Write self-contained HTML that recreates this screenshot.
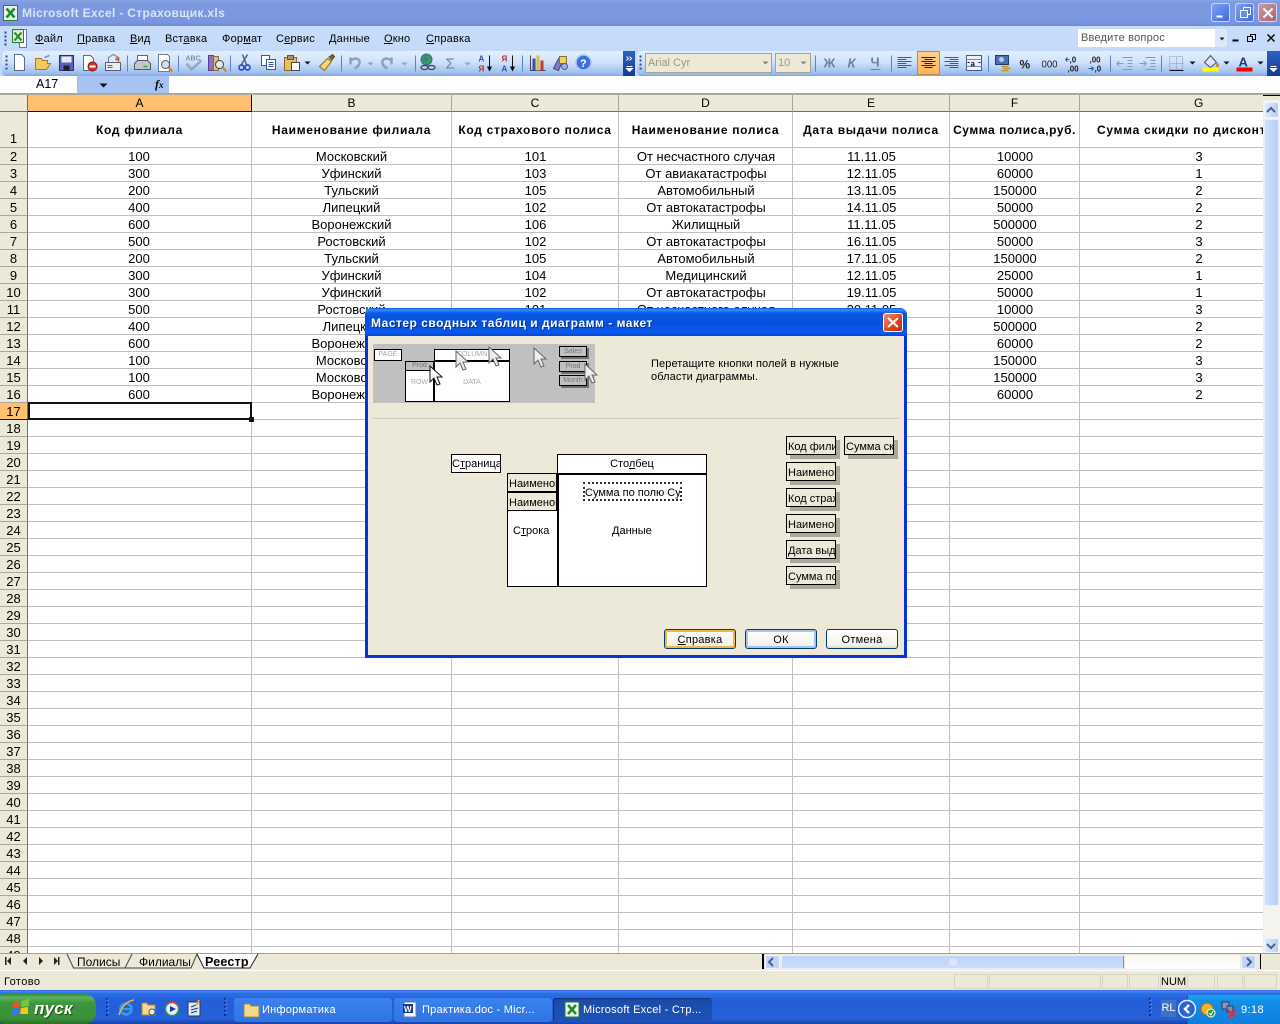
<!DOCTYPE html>
<html><head><meta charset="utf-8"><title>Microsoft Excel - Страховщик.xls</title>
<style>
html,body{margin:0;padding:0;background:#fff}
#p{position:relative;width:1280px;height:1024px;overflow:hidden;font-family:"Liberation Sans",sans-serif;font-size:11px;color:#000;background:#fff}
#p div,#p span.a{position:absolute;white-space:nowrap}
.m{top:33px;height:13px;line-height:13px;font-size:11px;letter-spacing:.2px}
.ch{top:95px;height:16px;line-height:17px;text-align:center;font-size:12px;background:#ece9d8;border-right:1px solid #aca899;border-bottom:1px solid #716f64;box-sizing:content-box}
.vl{top:112px;width:1px;height:841px;background:#c0c0c0}
.rh{left:0;width:27px;height:16px;line-height:17px;text-align:center;font-size:13px;background:#ece9d8;border-right:1px solid #716f64;border-bottom:1px solid #aca899;overflow:hidden}
.h{top:112px;height:35px;line-height:36px;font-weight:bold;font-size:12px;letter-spacing:.7px;text-align:center;overflow:hidden}
table{position:absolute;left:27px;top:148px;border-collapse:collapse;table-layout:fixed;width:1291px}
td{height:17px;padding:1px 0 0;box-sizing:border-box;text-align:center;font-size:13px;line-height:16px;white-space:nowrap;overflow:hidden}
tr{height:17px}
.b{background:#ece9d8;border:1px solid #000;box-sizing:border-box;overflow:hidden;font-size:11px;line-height:20px;letter-spacing:0;padding-left:1px}
.fb{width:50px;height:19px;box-shadow:4px 4px 0 #aca899}
.w{background:#fff;border:1px solid #000;box-sizing:border-box}
.btn{top:629px;width:72px;height:20px;border:1px solid #003c74;border-radius:3px;box-sizing:border-box;background:linear-gradient(#fff,#f3f2ea 85%,#dcd8c8);text-align:center;line-height:20px;font-size:11px;letter-spacing:.25px}
.sp{top:974px;height:15px;border:1px solid #d8d4c4;box-sizing:border-box}
.tb{top:998px;height:24px;border-radius:3px;color:#fff;font-size:11px;line-height:24px;letter-spacing:.25px;box-sizing:border-box}
.pv{font-size:7px;color:#a8a8a8;text-align:center;line-height:10px}
u{text-underline-offset:1px}
</style></head><body><div id="p">

<!-- title bar -->
<div style="left:0;top:0;width:1280px;height:26px;background:linear-gradient(#8aa5e4 0,#7d99e0 12%,#7a96df 85%,#6f8cd6 100%)"></div>
<div style="left:22px;top:6px;font-weight:bold;font-size:12px;letter-spacing:.33px;color:#d8e4f8;line-height:15px">Microsoft Excel - Страховщик.xls</div>
<div style="left:1211px;top:3px;width:19px;height:19px;border:1px solid #c7d5f5;border-radius:3px;box-sizing:border-box;background:linear-gradient(135deg,#7ea0ef,#3f6ce0)"></div>
<div style="left:1235px;top:3px;width:19px;height:19px;border:1px solid #c7d5f5;border-radius:3px;box-sizing:border-box;background:linear-gradient(135deg,#7ea0ef,#3f6ce0)"></div>
<div style="left:1258px;top:3px;width:19px;height:19px;border:1px solid #dcd5e5;border-radius:3px;box-sizing:border-box;background:linear-gradient(135deg,#c99aa8,#a8646f)"></div>

<!-- menu bar -->
<div style="left:0;top:26px;width:1280px;height:50px;background:linear-gradient(#c8dcfa,#c2d8f8)"></div>
<div class="m" style="left:35px"><u>Ф</u>айл</div>
<div class="m" style="left:77px"><u>П</u>равка</div>
<div class="m" style="left:130px"><u>В</u>ид</div>
<div class="m" style="left:165px">Вст<u>а</u>вка</div>
<div class="m" style="left:222px">Фор<u>м</u>ат</div>
<div class="m" style="left:276px">С<u>е</u>рвис</div>
<div class="m" style="left:329px"><u>Д</u>анные</div>
<div class="m" style="left:384px"><u>О</u>кно</div>
<div class="m" style="left:426px"><u>С</u>правка</div>
<div style="left:1078px;top:29px;width:149px;height:18px;background:#fff"></div>
<div style="left:1081px;top:31px;line-height:14px;color:#555;letter-spacing:.2px">Введите вопрос</div>
<div style="left:1215px;top:29px;width:12px;height:18px;background:#dbe8fb"></div>

<!-- toolbars -->
<div style="left:2px;top:51px;width:621px;height:25px;border-radius:4px 0 0 4px;background:linear-gradient(#e3effd,#cfe1fb 45%,#9dbdee 90%,#7fa4de)"></div>
<div style="left:623px;top:51px;width:12px;height:25px;background:linear-gradient(#2d62c4,#123a94)"></div>
<div style="left:637px;top:51px;width:630px;height:25px;border-radius:4px 0 0 4px;background:linear-gradient(#e3effd,#cfe1fb 45%,#9dbdee 90%,#7fa4de)"></div>
<div style="left:1267px;top:51px;width:13px;height:25px;background:linear-gradient(#2d62c4,#123a94)"></div>
<div style="left:645px;top:53px;width:127px;height:20px;background:#ece9d8;border:1px solid #a5a28f;box-sizing:border-box;color:#9a978a;line-height:18px;padding-left:2px">Arial Cyr</div>
<div style="left:775px;top:53px;width:36px;height:20px;background:#ece9d8;border:1px solid #a5a28f;box-sizing:border-box;color:#9a978a;line-height:18px;padding-left:2px">10</div>
<div style="left:917px;top:51px;width:23px;height:24px;background:linear-gradient(#ffd08a,#fdb45c);border:1px solid #b88a50;box-sizing:border-box"></div>

<!-- formula bar -->
<div style="left:0;top:76px;width:1280px;height:17px;background:#fff"></div>
<div style="left:77px;top:76px;width:92px;height:17px;background:#a6c3f3"></div>
<div style="left:36px;top:77px;font-size:12.5px;line-height:15px">A17</div>
<div style="left:155px;top:77px;font-family:'Liberation Serif',serif;font-style:italic;font-weight:bold;font-size:12px;line-height:15px">f<span style="font-size:9px">x</span></div>
<div style="left:0;top:93px;width:1280px;height:2px;background:#aca899"></div>

<!-- column headers -->
<div class="ch" style="left:0;width:27px;border-right-color:#716f64"></div>
<div class="ch" style="left:28px;width:223px;background:#ffc06f;border-right-color:#000080;border-bottom-color:#000080">A</div>
<div class="ch" style="left:252px;width:199px">B</div>
<div class="ch" style="left:452px;width:166px">C</div>
<div class="ch" style="left:619px;width:173px">D</div>
<div class="ch" style="left:793px;width:156px">E</div>
<div class="ch" style="left:950px;width:129px">F</div>
<div class="ch" style="left:1080px;width:183px;border-right:0;text-indent:114px;text-align:left">G</div>

<!-- grid -->
<div style="left:28px;top:147px;width:1235px;height:806px;background:repeating-linear-gradient(to bottom,#c0c0c0 0,#c0c0c0 1px,transparent 1px,transparent 17px)"></div>
<div class="vl" style="left:251px"></div><div class="vl" style="left:451px"></div><div class="vl" style="left:618px"></div><div class="vl" style="left:792px"></div><div class="vl" style="left:949px"></div><div class="vl" style="left:1079px"></div>

<!-- sheet header -->
<div class="h" style="left:28px;width:223px">Код филиала</div>
<div class="h" style="left:252px;width:199px">Наименование филиала</div>
<div class="h" style="left:452px;width:166px">Код страхового полиса</div>
<div class="h" style="left:619px;width:173px">Наименование полиса</div>
<div class="h" style="left:793px;width:156px">Дата выдачи полиса</div>
<div class="h" style="left:950px;width:129px;letter-spacing:.55px">Сумма полиса,руб.</div>
<div class="h" style="left:1080px;width:183px;text-align:left;text-indent:17px">Сумма скидки по дисконту</div>

<table>
<colgroup><col style="width:224px"><col style="width:201px"><col style="width:167px"><col style="width:174px"><col style="width:157px"><col style="width:130px"><col style="width:238px"></colgroup>
<tr><td>100</td><td>Московский</td><td>101</td><td>От несчастного случая</td><td>11.11.05</td><td>10000</td><td>3</td></tr>
<tr><td>300</td><td>Уфинский</td><td>103</td><td>От авиакатастрофы</td><td>12.11.05</td><td>60000</td><td>1</td></tr>
<tr><td>200</td><td>Тульский</td><td>105</td><td>Автомобильный</td><td>13.11.05</td><td>150000</td><td>2</td></tr>
<tr><td>400</td><td>Липецкий</td><td>102</td><td>От автокатастрофы</td><td>14.11.05</td><td>50000</td><td>2</td></tr>
<tr><td>600</td><td>Воронежский</td><td>106</td><td>Жилищный</td><td>11.11.05</td><td>500000</td><td>2</td></tr>
<tr><td>500</td><td>Ростовский</td><td>102</td><td>От автокатастрофы</td><td>16.11.05</td><td>50000</td><td>3</td></tr>
<tr><td>200</td><td>Тульский</td><td>105</td><td>Автомобильный</td><td>17.11.05</td><td>150000</td><td>2</td></tr>
<tr><td>300</td><td>Уфинский</td><td>104</td><td>Медицинский</td><td>12.11.05</td><td>25000</td><td>1</td></tr>
<tr><td>300</td><td>Уфинский</td><td>102</td><td>От автокатастрофы</td><td>19.11.05</td><td>50000</td><td>1</td></tr>
<tr><td>500</td><td>Ростовский</td><td>101</td><td>От несчастного случая</td><td>20.11.05</td><td>10000</td><td>3</td></tr>
<tr><td>400</td><td>Липецкий</td><td></td><td></td><td></td><td>500000</td><td>2</td></tr>
<tr><td>600</td><td>Воронежский</td><td></td><td></td><td></td><td>60000</td><td>2</td></tr>
<tr><td>100</td><td>Московский</td><td></td><td></td><td></td><td>150000</td><td>3</td></tr>
<tr><td>100</td><td>Московский</td><td></td><td></td><td></td><td>150000</td><td>3</td></tr>
<tr><td>600</td><td>Воронежский</td><td></td><td></td><td></td><td>60000</td><td>2</td></tr>
</table>

<!-- row headers -->
<div class="rh" style="top:112px;height:35px;line-height:54px">1</div>
<div class="rh" style="top:148px">2</div><div class="rh" style="top:165px">3</div><div class="rh" style="top:182px">4</div><div class="rh" style="top:199px">5</div><div class="rh" style="top:216px">6</div><div class="rh" style="top:233px">7</div><div class="rh" style="top:250px">8</div><div class="rh" style="top:267px">9</div><div class="rh" style="top:284px">10</div><div class="rh" style="top:301px">11</div><div class="rh" style="top:318px">12</div><div class="rh" style="top:335px">13</div><div class="rh" style="top:352px">14</div><div class="rh" style="top:369px">15</div><div class="rh" style="top:386px">16</div>
<div class="rh" style="top:403px;background:#ffc06f;border-bottom-color:#000080">17</div>
<div class="rh" style="top:420px">18</div><div class="rh" style="top:437px">19</div><div class="rh" style="top:454px">20</div><div class="rh" style="top:471px">21</div><div class="rh" style="top:488px">22</div><div class="rh" style="top:505px">23</div><div class="rh" style="top:522px">24</div><div class="rh" style="top:539px">25</div><div class="rh" style="top:556px">26</div><div class="rh" style="top:573px">27</div><div class="rh" style="top:590px">28</div><div class="rh" style="top:607px">29</div><div class="rh" style="top:624px">30</div><div class="rh" style="top:641px">31</div><div class="rh" style="top:658px">32</div><div class="rh" style="top:675px">33</div><div class="rh" style="top:692px">34</div><div class="rh" style="top:709px">35</div><div class="rh" style="top:726px">36</div><div class="rh" style="top:743px">37</div><div class="rh" style="top:760px">38</div><div class="rh" style="top:777px">39</div><div class="rh" style="top:794px">40</div><div class="rh" style="top:811px">41</div><div class="rh" style="top:828px">42</div><div class="rh" style="top:845px">43</div><div class="rh" style="top:862px">44</div><div class="rh" style="top:879px">45</div><div class="rh" style="top:896px">46</div><div class="rh" style="top:913px">47</div><div class="rh" style="top:930px">48</div>
<div class="rh" style="top:947px;height:6px;border-bottom:0">49</div>

<!-- selection -->
<div style="left:28px;top:402px;width:224px;height:18px;border:2px solid #111;box-sizing:border-box"></div>
<div style="left:249px;top:417px;width:5px;height:5px;background:#111;border:0"></div>

<!-- vertical scrollbar -->
<div style="left:1263px;top:95px;width:17px;height:858px;background:#f4f3ee"></div>
<div style="left:1263px;top:95px;width:17px;height:5px;background:#ece9d8;border-top:1px solid #000;box-sizing:border-box"></div>
<div style="left:1264px;top:102px;width:15px;height:16px;border-radius:2px;background:linear-gradient(90deg,#e1eafe,#b6cdf7);border:1px solid #eef3fd;box-sizing:border-box"></div>
<div style="left:1264px;top:119px;width:15px;height:787px;border-radius:2px;background:linear-gradient(90deg,#cfdffb,#b9cff8);border:1px solid #e6eefc;box-sizing:border-box"></div>
<div style="left:1264px;top:938px;width:15px;height:15px;border-radius:2px;background:linear-gradient(90deg,#e1eafe,#b6cdf7);border:1px solid #eef3fd;box-sizing:border-box"></div>

<!-- sheet tabs + hscroll -->
<div style="left:0;top:953px;width:1280px;height:1px;background:#a0a0a0"></div>
<div style="left:0;top:954px;width:1280px;height:16px;background:#ece9d8"></div>
<div style="left:0;top:970px;width:1280px;height:1px;background:#fff"></div>
<div style="left:0;top:971px;width:1280px;height:19px;background:#ece9d8"></div>
<div style="left:4px;top:976px;font-size:11px;line-height:13px;letter-spacing:.4px">Готово</div>
<svg style="position:absolute;left:0;top:953px" width="280" height="17">
<path d="M67 1L73.500 15H125L132 1" fill="#ece9d8" stroke="#444" stroke-width="1"/>
<path d="M125 15H191L197 1" fill="none" stroke="#444"/>
<path d="M197 1L204 15H250L258 1Z" fill="#fff" stroke="none"/>
<path d="M197 1L204 15H250L258 1" fill="none" stroke="#222"/>
<text x="77" y="13" font-family="Liberation Sans" font-size="12">Полисы</text>
<text x="139" y="13" font-family="Liberation Sans" font-size="12">Филиалы</text>
<text x="205" y="13" font-family="Liberation Sans" font-size="12.5" font-weight="bold" letter-spacing=".2">Реестр</text>
<path d="M5 4V12H6.500V4ZM11 4V12L7 8ZM23 8L27 4V12ZM39 4V12L43 8ZM54 4V12L58 8ZM58 4H59.500V12H58Z" fill="#222"/>
</svg>
<div style="left:762px;top:954px;width:2px;height:15px;background:#000"></div>
<div style="left:765px;top:955px;width:15px;height:14px;border-radius:2px;background:#c0d3f8;border:1px solid #eef3fd;box-sizing:border-box"></div>
<div style="left:781px;top:955px;width:343px;height:14px;border-radius:2px;background:linear-gradient(#bfd4fa,#cbdcfb);border:1px solid #e6eefc;border-right-color:#6f93d8;box-sizing:border-box"></div>
<div style="left:1125px;top:955px;width:115px;height:14px;background:linear-gradient(#f7f6f2,#fff)"></div>
<div style="left:1241px;top:955px;width:15px;height:14px;border-radius:2px;background:#c0d3f8;border:1px solid #eef3fd;box-sizing:border-box"></div>
<div style="left:1260px;top:954px;width:1px;height:15px;background:#000"></div>

<!-- status panels -->
<div class="sp" style="left:954px;width:34px"></div><div class="sp" style="left:989px;width:112px"></div><div class="sp" style="left:1102px;width:26px"></div><div class="sp" style="left:1129px;width:30px"></div>
<div class="sp" style="left:1160px;width:26px;line-height:14px;text-align:center;font-size:11px">NUM</div>
<div class="sp" style="left:1187px;width:28px"></div><div class="sp" style="left:1217px;width:26px"></div><div class="sp" style="left:1244px;width:33px"></div>

<!-- toolbar & misc icons -->
<svg style="position:absolute;left:0;top:0" width="1280" height="95" font-family="Liberation Sans">
<g transform="translate(.5 .5)">
<rect x="3" y="5" width="14" height="15" fill="#e8f2e6" stroke="#2f7d32"/><path d="M6 8L14 17M14 8L6 17" stroke="#1f8a30" stroke-width="2.500"/>
<rect x="1216" y="15" width="6" height="2" fill="#fff"/>
<rect x="1243" y="7" width="7" height="7" fill="none" stroke="#fff"/><rect x="1240" y="10" width="7" height="7" fill="#6a8fe8" stroke="#fff"/>
<path d="M1263 8L1272 17M1272 8L1263 17" stroke="#fff" stroke-width="2"/>
<path d="M5 31v2M5 35v2M5 39v2M5 43v2" stroke="#2a4a90" stroke-width="2"/>
<rect x="19" y="29" width="7" height="18" fill="#fff" stroke="#6a7a98"/><rect x="12" y="29" width="11" height="13" fill="#d8ecd8" stroke="#2f7d32"/><path d="M14 32L21 40M21 32L14 40" stroke="#1f8a30" stroke-width="2"/>
<path d="M1232 40h6" stroke="#000" stroke-width="2"/>
<rect x="1250" y="34" width="5" height="5" fill="none" stroke="#000"/><rect x="1247" y="36" width="5" height="5" fill="#c2d8f8" stroke="#000"/>
<path d="M1267 34L1274 41M1274 34L1267 41" stroke="#000" stroke-width="1.500"/>
<path d="M1219 37h5l-2.500 3z" fill="#222"/>
<path d="M6 55v2M6 59v2M6 63v2M6 67v2M640 55v2M640 59v2M640 63v2M640 67v2" stroke="#2a4a90" stroke-width="2"/>
<path d="M14 54H21L24 57V70H14Z" fill="#fff" stroke="#5a6a8c"/>
<path d="M35 69V58H41L42 60H47V63H50L46 69Z" fill="#f5c85a" stroke="#a87c20"/><path d="M44 57L49 55" stroke="#8090b0" stroke-width="1.500"/>
<rect x="59" y="55" width="14" height="15" fill="#5c60b8" stroke="#2b2e70"/><rect x="61" y="56" width="10" height="6" fill="#e6e9f6"/><rect x="63" y="65" width="6" height="5" fill="#222"/>
<path d="M83 55H90L93 58V70H83Z" fill="#fff" stroke="#5a6a8c"/><circle cx="92" cy="66" r="4.500" fill="#d8342a" stroke="#801a14"/><rect x="89" y="65" width="6" height="2" fill="#fff"/>
<path d="M108 62V57L113 54L118 57V62" fill="#e4e8f2" stroke="#707888"/><rect x="105" y="62" width="15" height="8" fill="#eceef4" stroke="#59627a"/><path d="M107 65h5M107 67h5" stroke="#59627a"/><rect x="115" y="57" width="4" height="3" fill="#d86040"/>
<rect x="137" y="55" width="10" height="6" fill="#fff" stroke="#666"/><path d="M134 69V63L137 60H147L150 63V69Z" fill="#c4c8d0" stroke="#555"/><rect x="143" y="65" width="4" height="2" fill="#2fb84a"/>
<path d="M158 54H167L169 56V71H158Z" fill="#fff" stroke="#6a7a98"/><circle cx="165" cy="64" r="4" fill="#cde0f4" stroke="#556"/><path d="M168 67L172 71" stroke="#c08a30" stroke-width="2"/>
<text x="185" y="60" font-size="7" font-weight="bold" fill="#8290ac">ABC</text><path d="M186 63L191 69L201 60" fill="none" stroke="#96a4bc" stroke-width="2.500"/>
<rect x="208" y="55" width="5" height="15" fill="#8a70c0" stroke="#554090"/><rect x="213" y="56" width="5" height="14" fill="#d8c078" stroke="#887030"/><circle cx="219" cy="64" r="4" fill="#dceaf8" stroke="#444"/><path d="M222 67L226 71" stroke="#c08a30" stroke-width="2"/>
<path d="M242 54L246 64M247 54L241 64" stroke="#546080" stroke-width="1.500"/><circle cx="241" cy="67" r="2.500" fill="none" stroke="#2a50b8" stroke-width="1.700"/><circle cx="247" cy="67" r="2.500" fill="none" stroke="#2a50b8" stroke-width="1.700"/>
<rect x="261" y="55" width="8" height="10" fill="#fff" stroke="#3a55a0"/><rect x="266" y="59" width="9" height="10" fill="#fff" stroke="#3a55a0"/><path d="M268 62h5M268 64h5M268 66h5" stroke="#3a55a0"/>
<rect x="284" y="57" width="12" height="13" fill="#e8c060" stroke="#8a6a20"/><rect x="287" y="55" width="6" height="4" fill="#a09080" stroke="#555"/><rect x="291" y="62" width="8" height="8" fill="#fff" stroke="#445"/>
<path d="M304 61h6l-3 3z" fill="#111"/>
<path d="M319 66L327 58L331 61L324 70Z" fill="#f3d870" stroke="#806a20"/><path d="M328 57L332 54L334 56L331 60" fill="#8a6030" stroke="#5a4020"/>
<path d="M350 57V64M350 60C356 56 360 59 359 63C358 66 356 67 354 68" fill="none" stroke="#8e9fbf" stroke-width="2.500"/>
<path d="M367 62h6l-3 3z" fill="#8e9fbf"/>
<path d="M391 57V64M391 60C385 56 381 59 382 63C383 66 385 67 387 68" fill="none" stroke="#8e9fbf" stroke-width="2.500"/>
<path d="M401 62h6l-3 3z" fill="#8e9fbf"/>
<circle cx="426" cy="59" r="5.500" fill="#3a9a50" stroke="#2a6ea8"/><path d="M423 57h4v3h-4z" fill="#3a70c8"/><ellipse cx="424" cy="67" rx="3.500" ry="2" fill="none" stroke="#444" stroke-width="1.300"/><ellipse cx="431" cy="67" rx="3.500" ry="2" fill="none" stroke="#444" stroke-width="1.300"/>
<text x="445" y="68" font-size="15" fill="#6f80a4">Σ</text><path d="M464 62h6l-3 3z" fill="#8e9fbf"/>
<text x="478" y="61" font-size="8" font-weight="bold" fill="#2a50a8">А</text><text x="478" y="71" font-size="8" font-weight="bold" fill="#a8322a">Я</text><path d="M489 55V68M487 66L489 70L491 66" fill="#111" stroke="#111"/>
<text x="501" y="61" font-size="8" font-weight="bold" fill="#a8322a">Я</text><text x="501" y="71" font-size="8" font-weight="bold" fill="#2a50a8">А</text><path d="M512 55V68M510 66L512 70L514 66" fill="#111" stroke="#111"/>
<path d="M530 55V70H545" fill="none" stroke="#445"/><rect x="532" y="58" width="3" height="12" fill="#3a50b0"/><rect x="536" y="55" width="3" height="15" fill="#d8c040"/><rect x="540" y="60" width="3" height="10" fill="#c83a30"/>
<path d="M553 68L558 58L562 60L558 70Z" fill="#8a78c8" stroke="#4a4088"/><rect x="559" y="56" width="7" height="7" fill="#f0d060" stroke="#887030"/><circle cx="564" cy="66" r="3" fill="#9db0e0" stroke="#4a5a98"/>
<circle cx="583" cy="62" r="7.500" fill="#3a70e0" stroke="#a8c4f4" stroke-width="1.500"/><text x="579.500" y="66.500" font-size="11" font-weight="bold" fill="#fff">?</text>
<path d="M127 55V71M178 55V71M230 55V71M341 55V71M415 55V71M522 55V71M815 55V71M891 55V71M988 55V71M1110 55V71M1161 55V71" stroke="#5e83c4"/>
<path d="M626 56l2 2-2 2M629 56l2 2-2 2" fill="none" stroke="#fff"/><path d="M626 66h6M626 68h6l-3 3z" fill="#fff" stroke="#fff"/>
<path d="M1270 66h6M1270 68h6l-3 3z" fill="#fff" stroke="#fff"/>
<path d="M762 61h6l-3 3zM800 61h6l-3 3z" fill="#8a8878"/>
<text x="823" y="67" font-size="13" font-weight="bold" fill="#6f80a4">Ж</text>
<text x="847" y="67" font-size="13" font-weight="bold" font-style="italic" fill="#6f80a4">К</text>
<text x="870" y="66" font-size="13" font-weight="bold" fill="#6f80a4">Ч</text><path d="M870 69h10" stroke="#6f80a4"/>
<path d="M897 57h14M897 59h9M897 61h14M897 63h9M897 65h14M897 67h9" stroke="#445a88"/>
<path d="M921 57h14M924 59h8M921 61h14M924 63h8M921 65h14M924 67h8" stroke="#223"/>
<path d="M944 57h14M949 59h9M944 61h14M949 63h9M944 65h14M949 67h9" stroke="#445a88"/>
<rect x="966" y="55" width="15" height="15" fill="#eef2fa" stroke="#4a5a88"/><path d="M966 59h15M966 66h15" stroke="#7b8cb2"/><text x="970" y="66" font-size="8" font-weight="bold" fill="#111">a</text><path d="M967 62h2M978 62h2" stroke="#111"/>
<rect x="995" y="55" width="13" height="9" fill="#4a70b8" stroke="#203a78"/><circle cx="1001" cy="59" r="2.500" fill="#bcd"/><path d="M1001 66h7M1003 68h7M1001 70h7" stroke="#c09a20" stroke-width="1.500"/>
<text x="1019" y="68" font-size="12" font-weight="bold" fill="#222">%</text>
<text x="1041" y="67" font-size="10.500" fill="#222" textLength="16" lengthAdjust="spacingAndGlyphs">000</text>
<text x="1069" y="62" font-size="8" font-weight="bold" fill="#222">,0</text><text x="1067" y="71" font-size="8" font-weight="bold" fill="#222">,00</text><path d="M1065 59h4M1065 59l2-2M1065 59l2 2" stroke="#2a50b8" fill="none"/>
<text x="1089" y="62" font-size="8" font-weight="bold" fill="#222">,00</text><text x="1094" y="71" font-size="8" font-weight="bold" fill="#222">,0</text><path d="M1088 68h5M1093 68l-2-2M1093 68l-2 2" stroke="#2a50b8" fill="none"/>
<path d="M1122 57h10M1127 60h5M1127 63h5M1127 66h5M1122 69h10" stroke="#8898b8"/><path d="M1116 63h7M1116 63l3-2.500M1116 63l3 2.500" stroke="#8898b8" fill="none"/>
<path d="M1145 57h10M1150 60h5M1150 63h5M1150 66h5M1145 69h10" stroke="#8898b8"/><path d="M1139 63h7M1146 63l-3-2.500M1146 63l-3 2.500" stroke="#8898b8" fill="none"/>
<rect x="1169" y="56" width="13" height="13" fill="none" stroke="#8898b8" stroke-dasharray="1 1"/><path d="M1176 57V69M1170 63h13" stroke="#8898b8" stroke-dasharray="1 1"/><path d="M1169 70h14" stroke="#111"/>
<path d="M1189 61h6l-3 3zM1223 61h6l-3 3zM1257 61h6l-3 3z" fill="#111"/>
<path d="M1204 62L1210 55L1216 62L1210 67Z" fill="#dde4f2" stroke="#444c66"/><path d="M1217 62c2 2 2 4 0 5c-2-1-2-3 0-5" fill="#c08a30"/><rect x="1202" y="67" width="16" height="4" fill="#ffff00"/>
<text x="1238" y="66" font-size="13" font-weight="bold" fill="#1a3a90">A</text><rect x="1236" y="67" width="16" height="4" fill="#f00000"/>
<path d="M99 83h8l-4 4z" fill="#111"/>
</g>
</svg>
<svg style="position:absolute;left:1263px;top:95px" width="17" height="858"><path d="M4 17L8 13L12 17" fill="none" stroke="#4d6185" stroke-width="2"/><path d="M4 849L8 853L12 849" fill="none" stroke="#4d6185" stroke-width="2"/></svg>
<svg style="position:absolute;left:760px;top:954px" width="510" height="16"><path d="M13 4L9 8L13 12" fill="none" stroke="#4d6185" stroke-width="2"/><path d="M487 4L491 8L487 12" fill="none" stroke="#4d6185" stroke-width="2"/><path d="M190 5V11M192 5V11M194 5V11M196 5V11" stroke="#eef3fd"/></svg>

<!-- taskbar -->
<div style="left:0;top:990px;width:1280px;height:34px;background:linear-gradient(#245edb 0,#3f8cf3 4%,#2c6fe5 10%,#245edb 30%,#2560d8 85%,#1941a5 100%)"></div>
<div style="left:1187px;top:995px;width:93px;height:29px;background:linear-gradient(#1ba4f0,#1290e8 20%,#0d7fdc);border-left:1px solid #0b5bc4;box-sizing:border-box"></div>
<div style="left:0;top:994px;width:96px;height:30px;border-radius:3px 11px 11px 3px;background:linear-gradient(#388e38 0,#5cb35c 12%,#3c963c 30%,#3a913a 80%,#2a702a 100%)"></div>
<div style="left:34px;top:999px;font-family:'Liberation Sans';font-size:17px;font-style:italic;font-weight:bold;color:#fff;line-height:20px;letter-spacing:.2px;text-shadow:1px 1px 1px #1a4a1a">пуск</div>
<svg style="position:absolute;left:0;top:990px" width="1280" height="34" font-family="Liberation Sans">
<path d="M13 13L20 11V17L12 18Z" fill="#e8542a"/><path d="M21 11L29 9V16L21 17Z" fill="#7ac23a"/><path d="M11 19L20 18V24L11 26Z" fill="#3a78e0"/><path d="M21 18L28 17V24L20 24Z" fill="#f2c820"/>
<path d="M107 8v2M107 12v2M107 16v2M107 20v2M107 24v2M225 8v2M225 12v2M225 16v2M225 20v2M225 24v2M1150 8v2M1150 12v2M1150 16v2M1150 20v2M1150 24v2" stroke="#0f2f90" stroke-width="2"/>
<path d="M108 9v2M108 13v2M108 17v2M108 21v2M226 9v2M226 13v2M226 17v2M226 21v2M1151 9v2M1151 13v2M1151 17v2M1151 21v2" stroke="#5f93ee" stroke-width="1"/>
<circle cx="126" cy="19" r="5.500" fill="none" stroke="#3a9ae8" stroke-width="2.500"/><path d="M121 19h10" stroke="#3a9ae8" stroke-width="2"/><path d="M119 25C121 17 127 11 134 10" fill="none" stroke="#f2b430" stroke-width="1.500"/>
<path d="M142 13h5l1 2h7v10h-13z" fill="#f6d88c" stroke="#a8873a"/><circle cx="152" cy="22" r="3" fill="#e4eef8" stroke="#556"/>
<circle cx="172" cy="19" r="6.500" fill="#e8eef8" stroke="#3a9a50" stroke-width="1.500"/><path d="M170 16L176 19L170 22Z" fill="#1a3a90"/><path d="M168 13.500A7 7 0 0 1 178 16" fill="none" stroke="#e04a30" stroke-width="1.500"/>
<rect x="188" y="12" width="12" height="14" fill="#dceaf8" stroke="#335"/><path d="M191 17L196 15M191 20L198 18M191 23L197 21" stroke="#1a3a90"/><path d="M199 10L197 15" stroke="#e8a020" stroke-width="2"/>
</svg>
<div style="left:1161px;top:1000px;width:15px;height:17px;background:#3f72c4;color:#fff;font-size:11px;line-height:17px;text-align:center">RL</div>
<div style="left:1241px;top:1003px;color:#fff;font-size:11px;line-height:14px;letter-spacing:.4px">9:18</div>
<svg style="position:absolute;left:1178px;top:998px" width="62" height="24">
<circle cx="9" cy="11" r="8.500" fill="#2a62d8" stroke="#e8f0fc" stroke-width="1.500"/><path d="M11 7L7 11L11 15" fill="none" stroke="#fff" stroke-width="2.500"/>
<circle cx="29" cy="11" r="6" fill="#f0b030" stroke="#a86a10"/><circle cx="33" cy="15" r="4" fill="#22a830" stroke="#fff"/><path d="M31 15l2 2 2-4" fill="none" stroke="#fff"/>
<rect x="44" y="4" width="7" height="7" fill="#8a98b8" stroke="#2a3a68"/><rect x="49" y="8" width="6" height="6" fill="#7f8fb0" stroke="#2a3a68"/><path d="M50 12L58 20M58 12L50 20" stroke="#e03030" stroke-width="2.200"/>
</svg>
<div class="tb" style="left:234px;width:158px;background:linear-gradient(#3a82ee,#2f74e4);padding-left:28px">Информатика</div>
<div class="tb" style="left:394px;width:158px;background:linear-gradient(#3a82ee,#2f74e4);padding-left:28px">Практика.doc - Micr...</div>
<div class="tb" style="left:553px;width:159px;background:linear-gradient(#1b4ba8,#1e52b8);padding-left:30px;box-shadow:inset 1px 1px 1px #123378">Microsoft Excel - Стр...</div>
<svg style="position:absolute;left:240px;top:1001px" width="340" height="18">
<path d="M4 3h6l1 2h8v11h-15z" fill="#f6d88c" stroke="#a8873a"/>
<rect x="164" y="1" width="12" height="15" fill="#fff" stroke="#6a7a98"/><rect x="163" y="3" width="10" height="9" fill="#1a3a90"/><text x="164" y="11" font-size="8" font-weight="bold" fill="#fff" font-family="Liberation Sans">W</text>
<rect x="325" y="1" width="14" height="15" fill="#e8f2e6" stroke="#2f7d32"/><path d="M328 4L336 13M336 4L328 13" stroke="#1f8a30" stroke-width="2.500"/>
</svg>

<!-- dialog -->
<div style="left:365px;top:308px;width:542px;height:350px;background:#ece9d8;border:3px solid #0831d9;border-top:0;border-radius:7px 7px 0 0;box-sizing:border-box"></div>
<div style="left:365px;top:308px;width:542px;height:28px;border-radius:7px 7px 0 0;background:linear-gradient(#0a5ae8 0,#3a8cf8 7%,#0a58e4 18%,#0550dc 55%,#0a5af0 85%,#0746cf 100%)"></div>
<div style="left:371px;top:315px;color:#fff;font-weight:bold;font-size:12px;line-height:16px;letter-spacing:.5px;text-shadow:1px 1px 0 #0a2f90">Мастер сводных таблиц и диаграмм - макет</div>
<div style="left:883px;top:313px;width:20px;height:19px;border:1px solid #fff;border-radius:3px;box-sizing:border-box;background:linear-gradient(135deg,#f09070,#d8421e 60%,#b83010)"></div>
<svg style="position:absolute;left:883px;top:313px" width="20" height="19"><path d="M5 5L15 14M15 5L5 14" stroke="#fff" stroke-width="2"/></svg>

<!-- preview image -->
<div style="left:373px;top:344px;width:222px;height:59px;background:#c0c0c0"></div>
<div class="w pv" style="left:374px;top:349px;width:28px;height:12px">PAGE</div>
<div class="w pv" style="left:434px;top:349px;width:76px;height:12px">COLUMN</div>
<div class="w pv" style="left:405px;top:361px;width:29px;height:41px;line-height:41px">ROW</div>
<div class="w pv" style="left:434px;top:361px;width:76px;height:41px;line-height:41px">DATA</div>
<div class="pv" style="left:405px;top:361px;width:29px;height:10px;background:#c0c0c0;border:1px solid #000;box-sizing:border-box;line-height:8px;color:#777">Prod</div>
<div class="pv" style="left:559px;top:346px;width:28px;height:11px;background:#c0c0c0;border:1px solid #000;box-sizing:border-box;line-height:9px;color:#777;box-shadow:2px 2px 0 #707070">Sales</div>
<div class="pv" style="left:559px;top:361px;width:28px;height:11px;background:#c0c0c0;border:1px solid #000;box-sizing:border-box;line-height:9px;color:#777;box-shadow:2px 2px 0 #707070">Prod</div>
<div class="pv" style="left:559px;top:375px;width:28px;height:11px;background:#c0c0c0;border:1px solid #000;box-sizing:border-box;line-height:9px;color:#777;box-shadow:2px 2px 0 #707070">Month</div>
<svg style="position:absolute;left:373px;top:344px" width="240" height="60">
<g fill="#eee" stroke="#666"><path d="M83 7V23L87 19L90 26L93 25L90 18L95 18Z"/><path d="M116 3V19L120 15L123 22L126 21L123 14L128 14Z"/><path d="M161 4V20L165 16L168 23L171 22L168 15L173 15Z"/><path d="M212 20V36L216 32L219 39L222 38L219 31L224 31Z"/></g>
<path d="M57 22V38L61 34L64 41L67 40L64 33L69 33Z" fill="#fff" stroke="#111"/>
</svg>
<div style="left:373px;top:418px;width:526px;height:1px;background:#d0cdbc"></div>
<div style="left:651px;top:358px;line-height:13px;letter-spacing:.1px">Перетащите кнопки полей в нужные<br>области диаграммы.</div>

<!-- pivot layout -->
<div class="w" style="left:451px;top:454px;width:50px;height:19px;line-height:19px;text-align:center;font-size:11px;overflow:hidden">С<u>т</u>раница</div>
<div class="w" style="left:557px;top:454px;width:150px;height:20px;line-height:19px;text-align:center;overflow:hidden">Сто<u>л</u>бец</div>
<div class="w" style="left:507px;top:473px;width:51px;height:114px"></div>
<div class="w" style="left:557px;top:473px;width:150px;height:114px;border-left-width:2px;border-top-width:2px"></div>
<div class="b" style="left:507px;top:473px;width:50px;height:19px">Наименование</div>
<div class="b" style="left:507px;top:492px;width:50px;height:19px">Наименование</div>
<div style="left:513px;top:525px;line-height:13px"><span>С<u>т</u>рока</span></div>
<div style="left:612px;top:525px;line-height:13px"><u>Д</u>анные</div>
<div style="left:583px;top:482px;width:99px;height:19px;border:2px dotted #333;box-sizing:border-box;background:#fff;overflow:hidden;line-height:18px;font-size:11px">Сумма по полю Сумма</div>
<div class="b fb" style="left:786px;top:436px">Код филиала</div>
<div class="b fb" style="left:844px;top:436px">Сумма скидки</div>
<div class="b fb" style="left:786px;top:462px">Наименование</div>
<div class="b fb" style="left:786px;top:488px">Код страхового</div>
<div class="b fb" style="left:786px;top:514px">Наименование</div>
<div class="b fb" style="left:786px;top:540px">Дата выдачи</div>
<div class="b fb" style="left:786px;top:566px">Сумма полиса</div>

<div class="btn" style="left:664px;box-shadow:inset 0 0 0 2px #f5b544"><u>С</u>правка</div>
<div class="btn" style="left:745px;box-shadow:inset 0 0 0 2px #a8c4ee">ОК</div>
<div class="btn" style="left:826px">Отмена</div>

</div></body></html>
